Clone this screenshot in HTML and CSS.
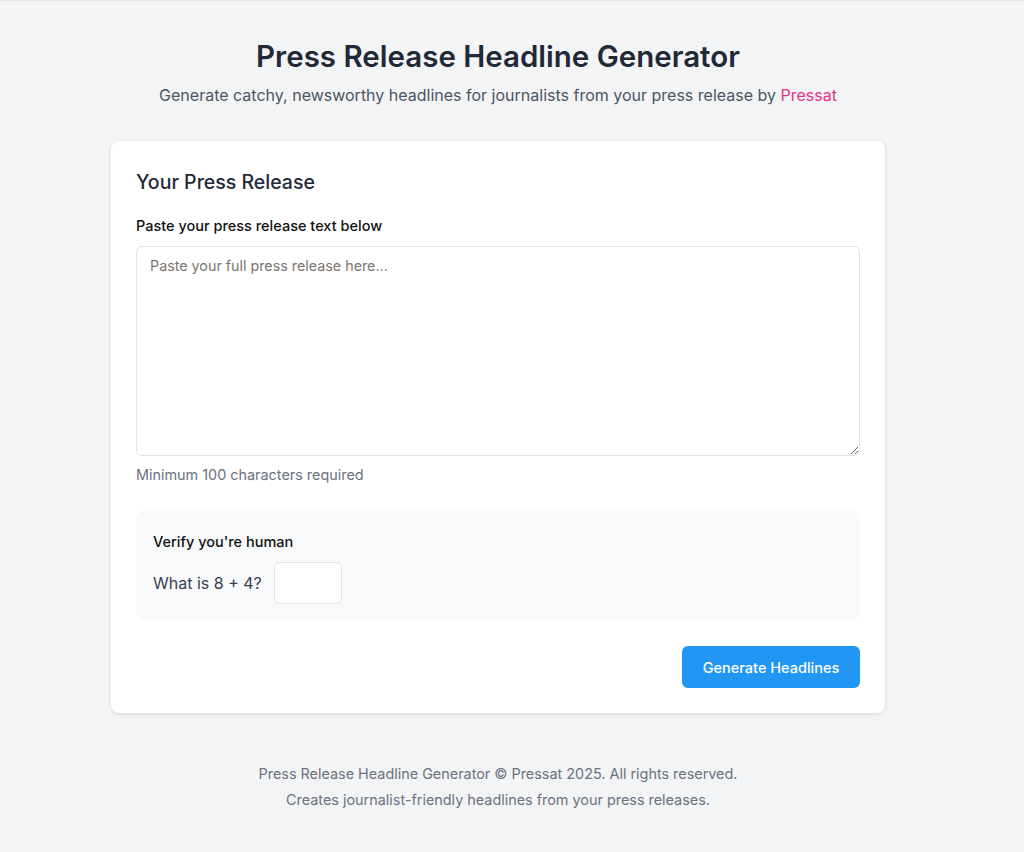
FILE: index.html
```html
<!DOCTYPE html>
<html lang="en">
<head>
    <meta charset="UTF-8">
    <meta name="viewport" content="width=device-width, initial-scale=1.0">
    <title>Press Release Headline Generator</title>
    <link rel="stylesheet" href="styles.css">
</head>

<body>
    <div class="page">
        <header class="header">
            <h1>Press Release Headline Generator</h1>
            <p class="subtitle">Generate catchy, newsworthy headlines for journalists from your press release by <a href="#">Pressat</a></p>
        </header>

        <form class="card">
            <h2>Your Press Release</h2>

            <label class="label" for="release">Paste your press release text below</label>
            <textarea id="release" placeholder="Paste your full press release here..."></textarea>
            <p class="hint">Minimum 100 characters required</p>

            <div class="captcha">
                <div class="label">Verify you're human</div>
                <div class="captcha-row">
                    <span>What is 8 + 4?</span>
                    <input type="text" class="captcha-input">
                </div>
            </div>

            <div class="actions">
                <button type="button" class="btn">Generate Headlines</button>
            </div>
        </form>

        <footer class="footer">
            <p>Press Release Headline Generator &copy; Pressat 2025. All rights reserved.</p>
            <p>Creates journalist-friendly headlines from your press releases.</p>
        </footer>
    </div>
</body>
</html>
```

FILE: styles.css
```css
* {
    box-sizing: border-box;
}

body {
    margin: 0;
    padding-right: 28px;
    font-family: Inter, "Noto Sans", sans-serif;
    background: #f3f4f6;
    color: #1f2937;
    border-top: 1px solid #e2e4e8;
}

.page {
    width: 774px;
    margin: 0 auto;
    padding-top: 37px;
}

.header {
    text-align: center;
}

h1 {
    margin: 0;
    font-size: 29.5px;
    font-weight: 600;
    line-height: 36px;
    color: #1f2937;
}

.subtitle {
    margin: 9px 0 0;
    font-size: 16px;
    line-height: 24px;
    color: #4b5563;
}

.subtitle a {
    color: #e0338a;
    text-decoration: none;
}

.card {
    margin-top: 34px;
    background: #fff;
    border-radius: 8px;
    padding: 25px;
    box-shadow: 0 1px 4px rgba(0, 0, 0, 0.12);
}

h2 {
    margin: 4px 0 0;
    font-size: 19.5px;
    font-weight: 500;
    line-height: 24px;
    color: #1f2937;
}

.label {
    display: block;
    margin-top: 22px;
    font-size: 14.5px;
    font-weight: 500;
    line-height: 20px;
    color: #111;
}

textarea {
    display: block;
    width: 100%;
    height: 210px;
    margin-top: 10px;
    padding: 8px 13px;
    border: 1px solid #e2e4e8;
    border-radius: 6px;
    font-family: inherit;
    font-size: 14.3px;
    line-height: 22px;
    color: #1f2937;
    resize: vertical;
}

textarea::placeholder {
    color: #7b7570;
}

.hint {
    margin: 9px 0 0;
    font-size: 14.4px;
    line-height: 20px;
    color: #6b7280;
}

.captcha {
    margin-top: 26px;
    background: #f8f9fa;
    border-radius: 8px;
    padding: 12px 17px 16px;
}

.captcha .label {
    margin-top: 9px;
}

.captcha-row {
    display: flex;
    align-items: center;
    gap: 12px;
    margin-top: 10px;
    font-size: 16px;
    color: #374151;
}

.captcha-input {
    width: 68px;
    height: 42px;
    border: 1px solid #e2e4e8;
    border-radius: 6px;
    background: #fff;
}

.actions {
    display: flex;
    justify-content: flex-end;
    margin-top: 26px;
}

.btn {
    width: 178px;
    height: 42px;
    border: none;
    border-radius: 6px;
    background: #2196f3;
    color: #fff;
    font-family: inherit;
    font-size: 14.5px;
    font-weight: 500;
}

.footer {
    margin-top: 48px;
    text-align: center;
    font-size: 14.4px;
    color: #6b7280;
}

.footer p {
    margin: 0;
    line-height: 26px;
}
```
